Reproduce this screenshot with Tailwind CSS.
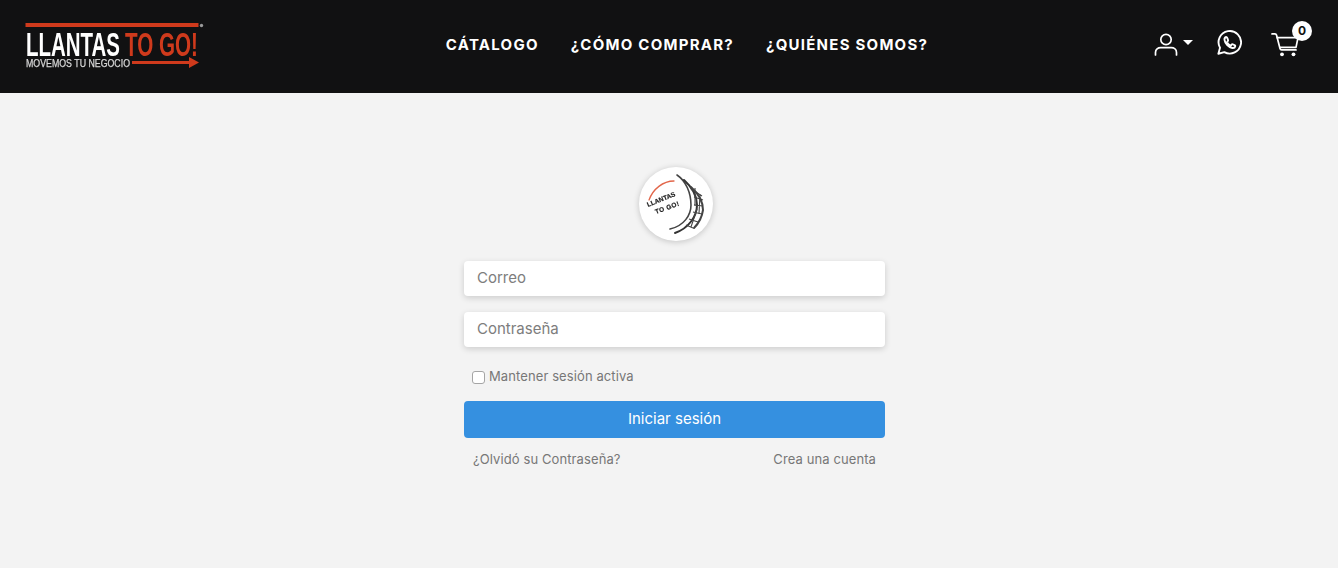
<!DOCTYPE html>
<html lang="es">
<head>
<meta charset="utf-8">
<title>Llantas To Go</title>
<script src="https://cdn.jsdelivr.net/npm/@tailwindcss/browser@4"></script>
</head>
<body class="bg-[#f3f3f3] font-['Inter',sans-serif]">
<div class="h-[568px] overflow-hidden flex flex-col">
<header class="h-[93px] shrink-0 bg-[#111112] flex items-center justify-between pl-[25px] pr-[39px]">
  <svg class="w-[180px] h-[50px] mt-[3px] overflow-visible blur-[0.3px]" viewBox="0 0 180 50" aria-label="Llantas To Go">
    <rect x="0.5" y="0" width="173" height="4" fill="#cf3a1c"/>
    <circle cx="176.500" cy="2.500" r="1.700" fill="#999"/>
    <text x="1" y="33" font-family="Liberation Sans" font-weight="700" font-size="33" fill="#fff" textLength="94" lengthAdjust="spacingAndGlyphs">LLANTAS</text>
    <text x="100" y="33" font-family="Liberation Sans" font-weight="700" font-size="33" fill="#cf3a1c" textLength="73" lengthAdjust="spacingAndGlyphs">TO GO!</text>
    <text x="1" y="44" font-family="Liberation Sans" font-weight="400" font-size="10" stroke="#d8d8d8" stroke-width="0.250" fill="#d8d8d8" textLength="104" lengthAdjust="spacingAndGlyphs">MOVEMOS TU NEGOCIO</text>
    <path d="M107 38h57v-4l10 5.500-10 5.500v-4h-57z" fill="#cf3a1c"/>
  </svg>
  <nav class="flex items-center gap-[32px] ml-[15px] mb-[2px] text-white font-bold text-[15px] tracking-[1.250px]">
    <a>CÁTALOGO</a>
    <a>¿CÓMO COMPRAR?</a>
    <a>¿QUIÉNES SOMOS?</a>
  </nav>
  <div class="flex items-center text-white">
    <svg class="w-[24px] h-[24px] mb-[6px]" viewBox="0 0 24 24" fill="none" stroke="currentColor" stroke-width="1.700" stroke-linecap="round"><circle cx="12" cy="7.500" r="5.200"/><path d="M1.500 23v-2.500c0-3 2.500-4.800 5.200-4.800h10.600c2.700 0 5.200 1.800 5.200 4.800V23"/></svg>
    <svg class="w-[10px] h-[5px] ml-[5px] mb-[9px]" viewBox="0 0 10 5" fill="currentColor"><path d="M0 0h10L5 5z"/></svg>
    <svg class="w-[25px] h-[25px] ml-[24px] mb-[8px]" viewBox="0 0 24 24" fill="none" stroke="currentColor" stroke-width="1.800" stroke-linejoin="round" stroke-linecap="round"><path d="M1.300 22.800l1.600-5.700A10.800 10.800 0 1 1 7 21.200z"/><path d="M8.800 6.700c-1 .3-1.800 1.400-1.600 2.800.5 3.500 4 7.200 7.500 7.800 1.500.2 2.600-.6 2.800-1.700.1-.4 0-.7-.3-.9l-2.100-1c-.4-.2-.7-.1-1 .2l-.6.8c-.2.200-.5.300-.8.100-1.300-.6-2.400-1.700-3-3-.1-.3 0-.5.200-.7l.6-.7c.2-.3.300-.6.100-.9l-.9-2.200c-.2-.4-.5-.5-.9-.4z"/></svg>
    <div class="relative ml-[29px] mb-[3px]">
      <svg class="block w-[28px] h-[24px]" viewBox="0 0 28 24" fill="none" stroke="currentColor" stroke-width="1.700" stroke-linecap="round" stroke-linejoin="round"><path d="M1 .9h3c.8 0 1.300.4 1.500 1.100L9 15.500c.2.900.7 1.400 1.600 1.400H25"/><path d="M6.200 4.700H27L25 14.300H8.800"/><circle cx="11" cy="21.300" r="1.900" fill="currentColor" stroke="none"/><circle cx="22.500" cy="21.300" r="1.900" fill="currentColor" stroke="none"/></svg>
      <span class="absolute -top-[12px] -right-[13px] w-[20px] h-[20px] rounded-full bg-white text-[#111] text-[12px] font-bold flex items-center justify-center">0</span>
    </div>
  </div>
</header>
<main class="w-[421px] mt-[74px] ml-[464px] flex flex-col">
  <div class="w-[74px] h-[74px] rounded-full bg-white self-center mb-[20px] ml-[3px] shadow-[0_1px_6px_rgba(0,0,0,0.2)]">
    <svg class="w-[74px] h-[74px] blur-[0.35px]" viewBox="0 0 74 74" fill="none" aria-label="Llantas To Go">
      <path d="M35 14C24 14 14 22 10 33" stroke="#e2664a" stroke-width="1.300" stroke-linecap="round"/>
      <path d="M38 8C47 14 52 26 52 38C52 48 45 59 31 62" stroke="#444" stroke-width="1.600" stroke-linecap="round"/>
      <path d="M45 13C54 21 58 30 58 38C58 49 50 61 36 66" stroke="#333" stroke-width="2" stroke-linecap="round"/>
      <path d="M52 20C61 28 64 36 64 43C63 50 60 56 55 61" stroke="#444" stroke-width="2" stroke-linecap="round"/>
      <path d="M52 22l11 7M55 30l9 3M55 38l9 1M54 45l9 2M50 52l9 3M47 58l7 3M56 21l0 18M61 27l-1 20M58 42l-6 18" stroke="#444" stroke-width="1.100"/>
      <text x="9" y="40" transform="rotate(-22 9 40)" font-family="Liberation Sans" font-weight="700" font-size="6.500" fill="#222" stroke="#222" stroke-width="0.200" textLength="30">LLANTAS</text>
      <text x="17" y="47" transform="rotate(-20 17 47)" font-family="Liberation Sans" font-weight="700" font-size="6.500" fill="#222" stroke="#222" stroke-width="0.200" textLength="25">TO GO!</text>
    </svg>
  </div>
  <input type="text" placeholder="Correo" class="h-[35px] w-full rounded-[4px] bg-white px-[13px] pb-[2px] text-[15px] text-[#666] placeholder:text-[#7d7d7d] shadow-[0_2px_6px_rgba(0,0,0,0.16)] outline-none">
  <input type="password" placeholder="Contraseña" class="h-[35px] w-full mt-[16px] rounded-[4px] bg-white px-[13px] pb-[2px] text-[15px] text-[#666] placeholder:text-[#7d7d7d] shadow-[0_2px_6px_rgba(0,0,0,0.16)] outline-none">
  <label class="flex items-center mt-[21px] ml-[8px] h-[18px] text-[13px] tracking-[0.1px] text-[#777]">
    <input type="checkbox" class="appearance-none w-[13px] h-[13px] bg-white border border-[#a5a5a5] rounded-[3px] mr-[4px]">
    <span>Mantener sesión activa</span>
  </label>
  <button class="mt-[15px] h-[37px] w-full rounded-[4px] bg-[#3590e0] text-white text-[15px]">Iniciar sesión</button>
  <div class="flex justify-between mt-[13px] px-[9px] text-[13px] tracking-[0.1px] leading-[17px] text-[#777]">
    <a>¿Olvidó su Contraseña?</a>
    <a>Crea una cuenta</a>
  </div>
</main>
</div>
</body>
</html>
